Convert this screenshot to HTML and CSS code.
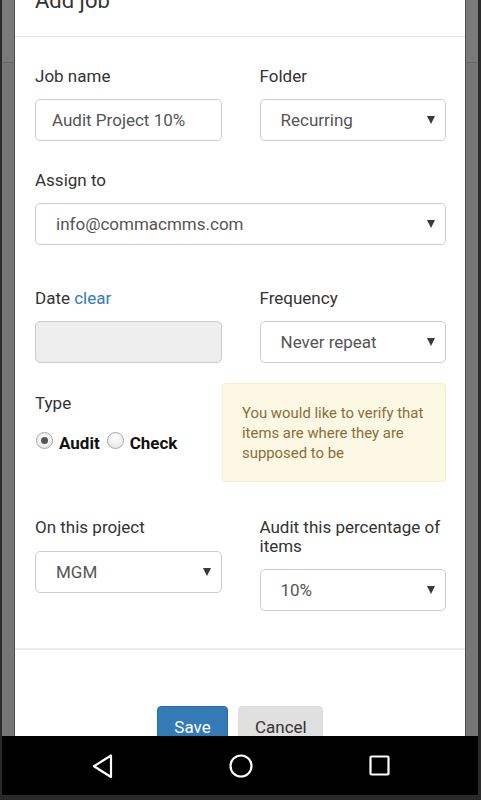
FILE: index.html
```html
<!DOCTYPE html>
<html>
<head>
<meta charset="utf-8">
<link rel="stylesheet" href="styles.css">
</head>
<body>
<div class="device">
  <div class="screen">
    <div class="backdrop">
      <div class="page-nav"></div>
      <div class="page-rest"></div>
    </div>
    <div class="modal">
      <div class="modal-header">
        <h4 class="modal-title">Add job</h4>
      </div>
      <div class="modal-body">
        <div class="row two">
          <div class="group">
            <label class="lbl">Job name</label>
            <div class="control input-text">Audit Project 10%</div>
          </div>
          <div class="group">
            <label class="lbl">Folder</label>
            <div class="control select"><span>Recurring</span><i class="caret"></i></div>
          </div>
        </div>
        <div class="row one">
          <div class="group">
            <label class="lbl">Assign to</label>
            <div class="control select"><span>info@commacmms.com</span><i class="caret"></i></div>
          </div>
        </div>
        <div class="row two date-row">
          <div class="group">
            <label class="lbl">Date <a class="link">clear</a></label>
            <div class="control disabled"></div>
          </div>
          <div class="group">
            <label class="lbl">Frequency</label>
            <div class="control select"><span>Never repeat</span><i class="caret"></i></div>
          </div>
        </div>
        <div class="row type-row">
          <div class="group type-group">
            <label class="lbl">Type</label>
            <div class="radios">
              <span class="radio checked"></span><span class="radio-label">Audit</span>
              <span class="radio"></span><span class="radio-label">Check</span>
            </div>
          </div>
          <div class="alert">You would like to verify that items are where they are supposed to be</div>
        </div>
        <div class="row two project-row">
          <div class="group">
            <label class="lbl">On this project</label>
            <div class="control select"><span>MGM</span><i class="caret"></i></div>
          </div>
          <div class="group">
            <label class="lbl">Audit this percentage of items</label>
            <div class="control select"><span>10%</span><i class="caret"></i></div>
          </div>
        </div>
      </div>
      <div class="modal-footer">
        <button class="btn btn-primary">Save</button>
        <button class="btn btn-default">Cancel</button>
      </div>
    </div>
  </div>
  <div class="navbar">
    <svg class="nav-icon" width="30" height="30" viewBox="0 0 30 30"><path d="M24 4.5 L24 26 L7 15.2 Z" fill="none" stroke="#fff" stroke-width="2.2" stroke-linejoin="round"/></svg>
    <svg class="nav-icon" width="30" height="30" viewBox="0 0 30 30"><circle cx="15" cy="15" r="10.5" fill="none" stroke="#fff" stroke-width="2.2"/></svg>
    <svg class="nav-icon" width="30" height="30" viewBox="0 0 30 30"><rect x="5.5" y="5.5" width="18" height="18" rx="1" fill="none" stroke="#fff" stroke-width="2.2"/></svg>
  </div>
</div>
</body>
</html>
```

FILE: styles.css
```css
* { box-sizing: border-box; }
html, body { margin: 0; padding: 0; }
body {
  background: #2a2a2a;
  font-family: Roboto, "Noto Sans", sans-serif;
  width: 481px;
  height: 800px;
  overflow: hidden;
}
.device {
  padding: 0 3px 5px 2px;
  height: 800px;
  display: flex;
  flex-direction: column;
}
.screen {
  position: relative;
  height: 736px;
  overflow: hidden;
}
.backdrop {
  height: 100%;
  display: flex;
  flex-direction: column;
}
.page-nav {
  height: 63px;
  background: #7a7a7a;
  border-bottom: 1px solid #666;
}
.page-rest {
  flex: 1;
  background: #767676;
}
.modal {
  position: absolute;
  left: 12px;
  top: 0;
  width: 452px;
  background: #fff;
  border: 1px solid #4e4e4e;
  border-top: none;
}
.modal-header {
  padding: 0 20px 23px;
  border-bottom: 1px solid #e5e5e5;
}
.modal-title {
  margin: -11px 0 0;
  font-size: 22px;
  line-height: 24px;
  font-weight: 400;
  color: #333;
}
.modal-body {
  padding: 29px 19px 0 20px;
}
.row.two {
  display: grid;
  grid-template-columns: 1fr 1fr;
  column-gap: 38px;
}
.row.one { margin-top: 29px; }
.date-row { margin-top: 43px; }
.type-row {
  margin-top: 20px;
  display: grid;
  grid-template-columns: 187px 1fr;
}
.project-row { margin-top: 36px; }
.group { display: flex; flex-direction: column; }
.lbl {
  font-size: 17px;
  line-height: 20px;
  color: #333;
  margin-bottom: 13px;
}
.link { color: #337ab7; }
.project-row .lbl { line-height: 19px; }
.project-row .group:first-child .lbl { margin-bottom: 14px; }
.control {
  height: 42px;
  border: 1px solid #ccc;
  border-radius: 5px;
  font-size: 17px;
  color: #555;
  display: flex;
  align-items: center;
}
.input-text { padding-left: 16px; }
.select { padding: 0 10px 0 20px; justify-content: space-between; }
.caret {
  width: 0; height: 0;
  border-left: 4.5px solid transparent;
  border-right: 4.5px solid transparent;
  border-top: 8px solid #3a3a3a;
}
.disabled { background: #eee; }
.type-group { padding-top: 10px; }
.type-group .lbl { margin-bottom: 20px; }
.radios {
  display: flex;
  align-items: center;
}
.radio {
  width: 17px;
  height: 17px;
  border-radius: 50%;
  border: 1px solid #a8a8a8;
  background: radial-gradient(circle at 50% 35%, #fdfdfd 0%, #e2e2e2 100%);
  margin-left: 1px;
  margin-top: -6px;
  position: relative;
}
.radio.checked::after {
  content: "";
  position: absolute;
  left: 4px; top: 4px;
  width: 7px; height: 7px;
  border-radius: 50%;
  background: #555;
}
.radio-label {
  font-weight: 700;
  font-size: 17px;
  color: #111;
  margin: 0 6px 0 6px;
}
.alert {
  background: #fcf8e3;
  border: 1px solid #faebcc;
  border-radius: 4px;
  color: #8a6d3b;
  font-size: 14.9px;
  line-height: 20px;
  padding: 19px 16px 18px 19px;
}
.modal-footer {
  margin-top: 37px;
  border-top: 2px solid #eee;
  padding-top: 56px;
  display: flex;
  justify-content: center;
  gap: 10px;
  height: 160px;
}
.btn {
  font-family: Roboto, "Noto Sans", sans-serif;
  font-size: 17px;
  height: 42px;
  border-radius: 4px;
  padding: 0 16px;
}
.btn-primary {
  background: #337ab7;
  border: 1px solid #2e6da4;
  color: #fff;
  width: 71px;
}
.btn-default {
  background: #e0e0e0;
  border: 1px solid #ddd;
  color: #333;
  width: 85px;
}
.navbar {
  height: 59px;
  background: #000;
  display: flex;
  align-items: center;
  justify-content: center;
  gap: 109px;
  padding-left: 1px;
}
.nav-icon { display: block; }
```
